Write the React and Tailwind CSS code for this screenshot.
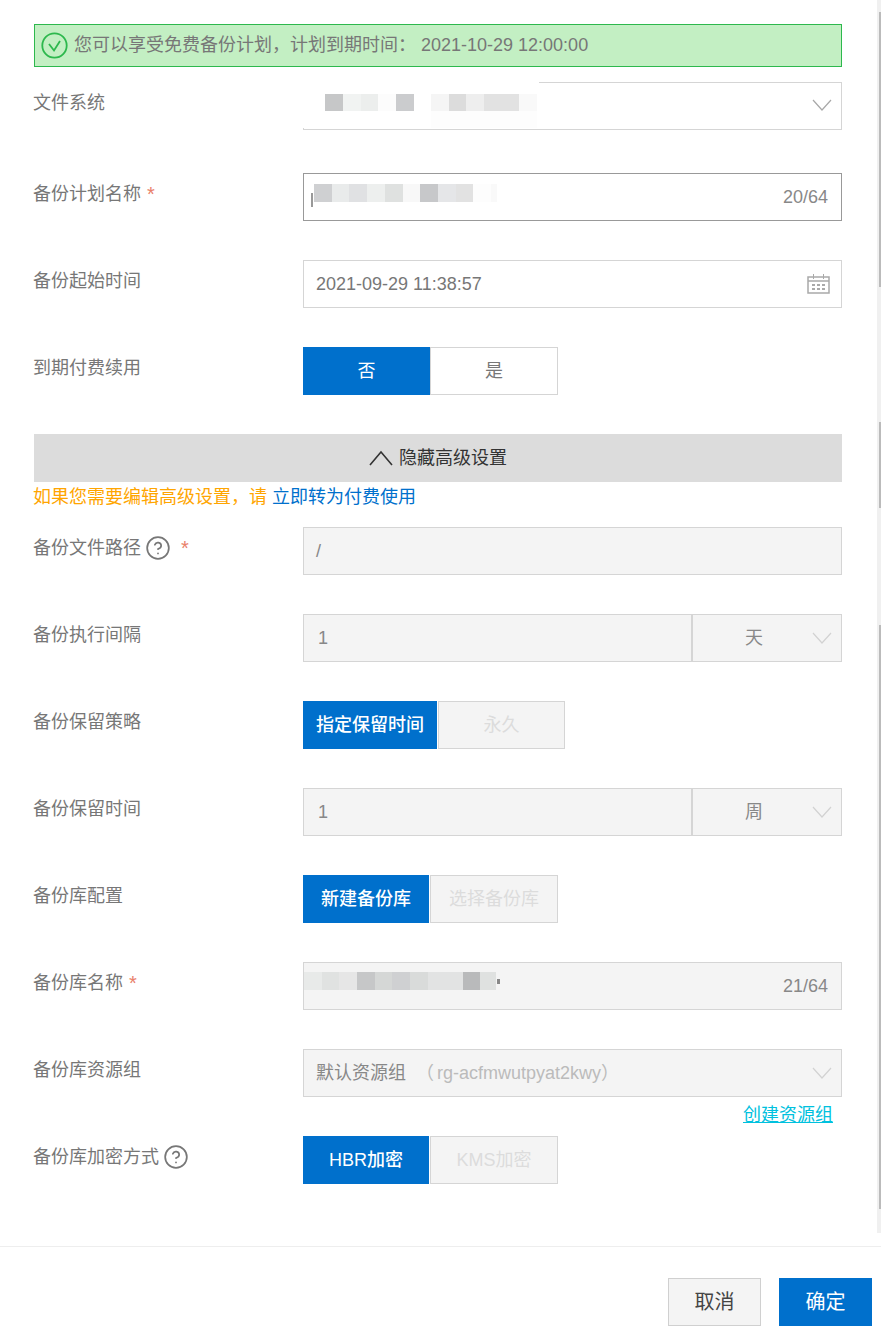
import React from "react";
import { CircleHelp } from "lucide-react";

const Chevron = ({ className = "stroke-[#a8a8a8]" }) => (
  <svg width="20" height="12" viewBox="0 0 20 12" fill="none" className={className}>
    <polyline points="1,1 10,11 19,1" strokeWidth="1.2" />
  </svg>
);

const Calendar = () => (
  <svg width="23" height="20" viewBox="0 0 23 20" fill="none" className="stroke-[#a9a9a9]">
    <rect x="1" y="3" width="21" height="16" strokeWidth="1.5" />
    <line x1="1" y1="7" x2="22" y2="7" strokeWidth="1.5" />
    <line x1="6.5" y1="0" x2="6.5" y2="5" strokeWidth="1" />
    <line x1="16.5" y1="0" x2="16.5" y2="5" strokeWidth="1" />
    <g strokeWidth="2" strokeDasharray="3 2">
      <line x1="5" y1="11" x2="18" y2="11" />
      <line x1="5" y1="15" x2="18" y2="15" />
    </g>
  </svg>
);

const Star = ({ className = "" }) => (
  <span className={`text-[#e9806a] text-[20px] ${className}`}>*</span>
);

const Help = () => <CircleHelp size={26} strokeWidth={1.6} className="text-[#777] ml-[1px]" />;

// redacted strips from the screenshot
const fileBlocks = [
  "w-[18px] bg-[#c6c7c8]",
  "w-[18px] bg-[#f1f3f2]",
  "w-[17px] bg-[#eceeed]",
  "w-[18px] bg-[#fcfcfc]",
  "w-[18px] bg-[#cbccce]",
  "w-[17px] bg-white",
  "w-[18px] bg-[#f5f5f5]",
  "w-[17px] bg-[#dcdcdc]",
  "w-[18px] bg-[#eeeeee]",
  "w-[35px] bg-[#e2e2e2]",
  "w-[18px] bg-[#f9f9f9]",
];

const planBlocks = [
  "w-[18px] bg-[#cfd0d2]",
  "w-[17px] bg-[#e9ebeb]",
  "w-[18px] bg-[#e0e1e3]",
  "w-[18px] bg-[#edefee]",
  "w-[18px] bg-[#dfe1e0]",
  "w-[17px] bg-[#f8f8f8]",
  "w-[18px] bg-[#c7c8ca]",
  "w-[18px] bg-[#e5e6e8]",
  "w-[17px] bg-[#e2e2e2]",
  "w-[18px] bg-[#fdfdfd]",
  "w-[6px] bg-[#f9f9f9]",
];

const vaultBlocks = [
  "w-[18px] bg-[#e8eae9]",
  "w-[17px] bg-[#e0e2e1]",
  "w-[18px] bg-[#e6e6e6]",
  "w-[18px] bg-[#c6c7c8]",
  "w-[17px] bg-[#d5d7d6]",
  "w-[18px] bg-[#cfd0d2]",
  "w-[18px] bg-[#d9dbda]",
  "w-[35px] bg-[#e2e3e3]",
  "w-[17px] bg-[#b9babb]",
  "w-[16px] bg-[#dfe1e0]",
];

const Mosaic = ({ blocks, className }) => (
  <div className={`absolute flex ${className}`}>
    {blocks.map((b, i) => (
      <div key={i} className={`h-full ${b}`} />
    ))}
  </div>
);

const Row = ({ label, children, below, className = "mb-[39px]" }) => (
  <div className={`flex ${className}`}>
    <div className="w-[269px] h-[42px] -ml-px mr-px flex items-center text-[18px] text-[#777] shrink-0 gap-[3px]">
      {label}
    </div>
    <div className="w-[539px]">
      <div className="h-[48px]">{children}</div>
      {below}
    </div>
  </div>
);

const Box = ({ children, className = "bg-white border-[#d5d5d5]" }) => (
  <div className={`relative h-full border flex items-center justify-between pl-[12px] pr-[13px] ${className}`}>
    {children}
  </div>
);

const Toggle = ({ left, right, leftW, rightW, rightClass = "bg-[#f4f4f4] text-[#dcdcdc]" }) => (
  <div className="flex h-full text-[18px]">
    <div className={`flex items-center justify-center bg-[#0070cc] text-white h-full ${leftW}`}>{left}</div>
    <div className={`flex items-center justify-center border border-[#d5d5d5] h-full ${rightW} ${rightClass}`}>{right}</div>
  </div>
);

const Split = ({ value, unit }) => (
  <div className="flex h-full border border-[#d5d5d5] bg-[#f4f4f4] text-[18px] text-[#888]">
    <div className="w-[389px] flex items-center pl-[14px] border-r-2 border-[#d5d5d5]">{value}</div>
    <div className="flex-1 flex items-center pl-[52px] pr-[9px] justify-between">
      <span>{unit}</span>
      <Chevron className="stroke-[#d2d2d2]" />
    </div>
  </div>
);

export default function App() {
  return (
    <div className="relative w-[881px] h-[1327px] overflow-hidden bg-white flex flex-col [font-family:'Liberation_Sans','Noto_Sans_CJK_SC',sans-serif]">
      {/* scrollbar track */}
      <div className="absolute right-0 top-0 w-[4px] h-[1233px] bg-[#f0f0f0]">
        <div className="absolute right-0 top-[12px] w-[2px] h-[275px] bg-[#bbbbbb]" />
        <div className="absolute right-0 top-[422px] w-[2px] h-[86px] bg-[#bbbbbb]" />
        <div className="absolute right-0 top-[625px] w-[2px] h-[584px] bg-[#bbbbbb]" />
      </div>

      <div className="h-[1246px] pt-[24px] pl-[34px] pr-[39px]">
        <div className="h-[43px] mb-[15px] border border-[#2db84d] bg-[#c3efc3] flex items-center pl-[6px] gap-[6px] text-[18px] text-[#777]">
          <svg width="27" height="27" viewBox="0 0 27 27" fill="none" className="stroke-[#2db84d]">
            <circle cx="13.5" cy="13.5" r="12.2" strokeWidth="1.8" />
            <polyline points="8,12 13,18.5 19,9" strokeWidth="1.8" />
          </svg>
          <span>您可以享受免费备份计划，计划到期时间： 2021-10-29 12:00:00</span>
        </div>

        <Row label="文件系统" className="mb-[43px]">
          <Box>
            <span />
            <span className="-mr-[4px] -mt-[2px]"><Chevron /></span>
            {/* redaction over the top left of the field */}
            <div className="absolute -left-px -top-px w-[236px] h-[46px] bg-white" />
            <Mosaic blocks={fileBlocks} className="left-[21px] top-[11px] h-[17px]" />
            <div className="absolute left-[127px] top-[28px] w-[106px] h-[17px] bg-[#fdfdfd]" />
          </Box>
        </Row>

        <Row label={<>备份计划名称<Star className="ml-[3px]" /></>}>
          <Box className="bg-white border-[#999]">
            <span />
            <span className="text-[18px] text-[#888]">20/64</span>
            <div className="absolute left-[7px] top-[19px] w-[2px] h-[14px] bg-[#999]" />
            <Mosaic blocks={planBlocks} className="left-[10px] top-[10px] h-[18px]" />
          </Box>
        </Row>

        <Row label="备份起始时间">
          <Box>
            <span className="text-[18px] text-[#777]">2021-09-29 11:38:57</span>
            <span className="-mr-[2px]"><Calendar /></span>
          </Box>
        </Row>

        <Row label="到期付费续用">
          <Toggle left="否" right="是" leftW="w-[127px]" rightW="w-[128px]" rightClass="bg-white text-[#777]" />
        </Row>

        <div className="h-[48px] bg-[#dcdcdc] flex items-center justify-center gap-[6px] text-[18px] text-[#333]">
          <svg width="24" height="16" viewBox="0 0 24 16" fill="none" className="stroke-[#333]">
            <polyline points="1,15 12,2 23,15" strokeWidth="1.6" />
          </svg>
          <span>隐藏高级设置</span>
        </div>
        <div className="h-[45px] pt-[3px] -ml-px text-[18px] leading-[24px] text-[#ffa500]">
          如果您需要编辑高级设置，请<span className="ml-[5px] text-[#0070cc]">立即转为付费使用</span>
        </div>

        <Row label={<>备份文件路径<Help /><Star className="ml-[7px]" /></>}>
          <Box className="bg-[#f4f4f4] border-[#d5d5d5]">
            <span className="text-[18px] text-[#888]">/</span>
          </Box>
        </Row>

        <Row label="备份执行间隔">
          <Split value="1" unit="天" />
        </Row>

        <Row label="备份保留策略">
          <Toggle left="指定保留时间" right="永久" leftW="w-[134px] font-medium" rightW="w-[127px] ml-px" />
        </Row>

        <Row label="备份保留时间">
          <Split value="1" unit="周" />
        </Row>

        <Row label="备份库配置">
          <Toggle left="新建备份库" right="选择备份库" leftW="w-[126px] font-medium" rightW="w-[128px] ml-px" />
        </Row>

        <Row label={<>备份库名称<Star className="ml-[3px]" /></>}>
          <Box className="bg-[#f4f4f4] border-[#d5d5d5]">
            <span />
            <span className="text-[18px] text-[#888]">21/64</span>
            <Mosaic blocks={vaultBlocks} className="left-0 top-[9px] h-[18px]" />
            <div className="absolute left-[193px] top-[16px] w-[3px] h-[5px] bg-[#888]" />
          </Box>
        </Row>

        <Row
          label="备份库资源组"
          className="mb-0"
          below={
            <div className="h-[39px] pt-[6px] pr-[9px] text-right text-[18px] leading-[24px] text-[#00c1de] underline">
              创建资源组
            </div>
          }
        >
          <Box className="bg-[#f4f4f4] border-[#d5d5d5]">
            <span className="text-[18px]">
              <span className="text-[#888]">默认资源组</span>
              <span className="ml-[10px] mr-[3px] text-[#bbbbbb]">（</span>
              <span className="text-[#bbbbbb]">rg-acfmwutpyat2kwy）</span>
            </span>
            <span className="-mr-[4px]"><Chevron className="stroke-[#d2d2d2]" /></span>
          </Box>
        </Row>

        <Row label={<>备份库加密方式<Help /></>} className="">
          <Toggle left="HBR加密" right="KMS加密" leftW="w-[126px] font-medium" rightW="w-[128px] ml-px" />
        </Row>
      </div>

      {/* footer */}
      <div className="flex-1 border-t border-[#eeeeee] pt-[31px] pr-[9px] flex justify-end items-start gap-[18px] text-[20px]">
        <button className="w-[93px] h-[48px] border border-[#d0d0d0] bg-[#f4f4f4] text-[#444]">取消</button>
        <button className="w-[93px] h-[48px] bg-[#0070cc] text-white">确定</button>
      </div>
    </div>
  );
}
